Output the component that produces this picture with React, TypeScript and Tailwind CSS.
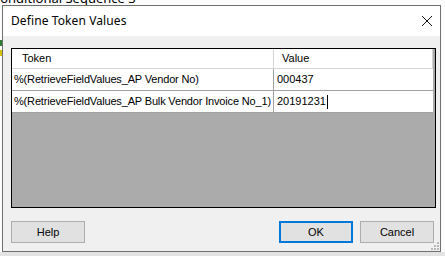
import React from "react";

export default function App() {
  const rows = [
    { token: "%(RetrieveFieldValues_AP Vendor No)", value: "000437", caret: false },
    { token: "%(RetrieveFieldValues_AP Bulk Vendor Invoice No_1)", value: "20191231", caret: true },
  ];
  return (
    <div className="relative w-[445px] h-[256px] overflow-hidden bg-[#fdfdfd]" style={{ fontFamily: '"Liberation Sans", Arial, sans-serif' }}>
      {/* background app text */}
      <div className="absolute left-[-8px] top-[-11px] text-[13px] text-black" style={{ fontFamily: '"Noto Sans", sans-serif' }}>
        Conditional Sequence 3
      </div>
      <div className="absolute left-0 top-[40px] w-[2px] h-[6px] bg-[#2e7d32]" />
      <div className="absolute left-0 top-[50px] w-[2px] h-[6px] bg-[#d4c200]" />
      <div className="absolute left-0 top-[252px] w-[445px] h-[4px] bg-[#e3e3e3]" />

      {/* dialog window */}
      <div className="absolute left-[2px] top-[5px] w-[439px] h-[247px] border border-[#6f6f6f] bg-[#f0f0f0] flex flex-col">
        <div className="h-[30px] bg-white flex items-center justify-between pl-[8px] pr-[6px]">
          <span className="text-[12px] text-black tracking-[0.1px]" style={{ fontFamily: '"Noto Sans", sans-serif' }}>Define Token Values</span>
          <svg width="12" height="12" viewBox="0 0 12 12" className="mr-[1px]">
            <path d="M1 1 L11 11 M11 1 L1 11" stroke="#111" strokeWidth="1" />
          </svg>
        </div>
        <div className="flex-1 flex flex-col pl-[8px] pr-[4px] pt-[12px]">
          <div className="w-[425px] h-[160px] border border-black bg-[#ababab] flex flex-col">
            <div className="flex h-[20px] bg-white border-b border-[#d5d5d5] w-[421px] text-[11px] text-black">
              <div className="w-[262px] border-r border-[#d5d5d5] pl-[10px] flex items-center">Token</div>
              <div className="flex-1 pl-[8px] flex items-center border-r border-[#d5d5d5]">Value</div>
            </div>
            {rows.map((r, i) => (
              <div key={i} className="flex h-[22px] bg-white border-b border-[#a0a0a0] w-[421px] text-[11px] text-black">
                <div className="w-[262px] border-r border-[#a0a0a0] pl-[2px] flex items-center whitespace-nowrap overflow-hidden tracking-[-0.16px]">{r.token}</div>
                <div className="flex-1 pl-[3px] flex items-center">
                  {r.value}
                  {r.caret && <span className="inline-block w-[1px] h-[14px] bg-black ml-[1px]" />}
                </div>
              </div>
            ))}
          </div>
          <div className="flex items-center mt-[13px] text-[11px] text-black">
            <button className="w-[74px] h-[22px] border border-[#adadad] bg-[#e1e1e1] flex items-center justify-center">Help</button>
            <div className="flex-1" />
            <button className="w-[74px] h-[22px] border-2 border-[#0078d7] bg-[#e1e1e1] flex items-center justify-center">OK</button>
            <button className="ml-[7px] mr-[2px] w-[74px] h-[22px] border border-[#adadad] bg-[#e1e1e1] flex items-center justify-center">Cancel</button>
          </div>
        </div>
        <svg className="absolute right-[1px] bottom-[1px]" width="9" height="9" viewBox="0 0 9 9">
          <rect x="7" y="1" width="2" height="2" fill="#b8b8b8" />
          <rect x="4" y="4" width="2" height="2" fill="#b8b8b8" />
          <rect x="7" y="4" width="2" height="2" fill="#b8b8b8" />
          <rect x="1" y="7" width="2" height="2" fill="#b8b8b8" />
          <rect x="4" y="7" width="2" height="2" fill="#b8b8b8" />
          <rect x="7" y="7" width="2" height="2" fill="#b8b8b8" />
        </svg>
      </div>
    </div>
  );
}
